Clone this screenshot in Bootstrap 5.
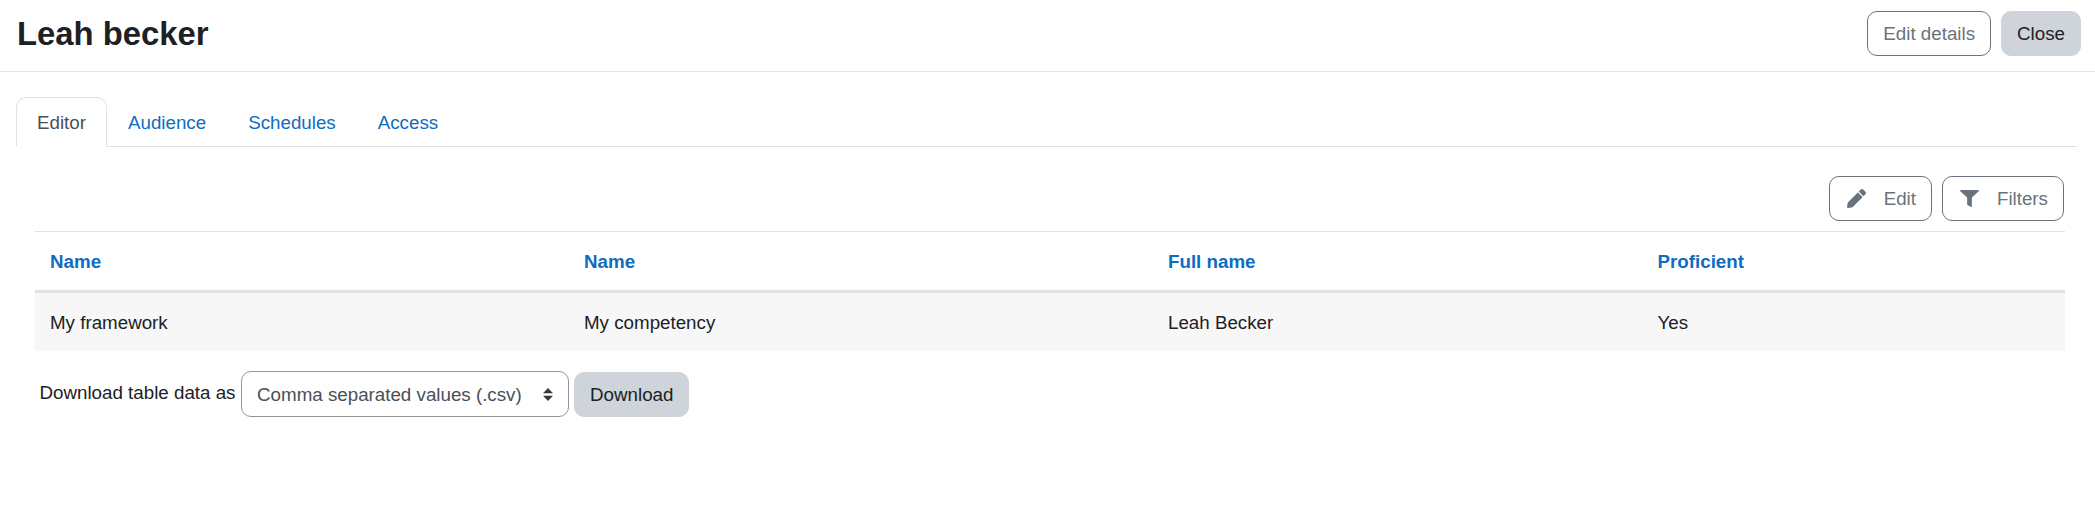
<!DOCTYPE html>
<html lang="en">
<head>
<meta charset="utf-8">
<title>Leah becker</title>
<link rel="stylesheet" href="https://cdn.jsdelivr.net/npm/bootstrap@5.3.0/dist/css/bootstrap.min.css">
<style>
html,body{background:#fff}
body{font-family:"Liberation Sans",Arial,sans-serif;font-size:18.75px;color:#1d2125;line-height:1.5}
.page-head{height:72px;padding:11px 14px 0 17px;border-bottom:1px solid #e3e4e6}
.page-title{font-family:"Liberation Sans",Arial,sans-serif;font-size:32.8px;font-weight:700;line-height:45px;margin:0;color:#1d2125}
.act{font-size:18.75px;line-height:28.1px;padding:7.5px 15px;border-radius:10px;height:45px;white-space:nowrap}
.act-out{border:1px solid #6a737b;color:#6a737b;background:#fff}
.act-sec{border:1px solid #ced4da;background:#ced4da;color:#1d2125}
.act-ic{fill:#6a737b;width:19px;height:19px;flex:none}
.act-ic-funnel{height:17px}
.act-icon{display:flex;align-items:center;gap:18px;padding-left:17px}
.act-gap{gap:10px}
.tabs-wrap{margin:25px 18px 0 16px}
.tabs-wrap .nav-link{font-size:18.75px;line-height:28.1px;padding:11px 20px 9px;color:#0f6cbf;border-radius:10px 10px 0 0}
.tabs-wrap .nav-link.active{color:#495057;border-color:#dee2e6 #dee2e6 #fff}
.bar-row{margin:29px 31px 0 35px;gap:10px}
.data-wrap{margin:10px 30px 0 35px}
.data-tbl{--bs-table-color:#1d2125;width:100%;table-layout:fixed;margin:0}
.data-tbl th,.data-tbl td{padding:16px 15px 14px;font-size:18.75px;line-height:28.1px;vertical-align:middle}
.data-tbl thead th{border-top:1px solid #dee2e6;border-bottom:3px solid #dee2e6}
.data-tbl tbody td{background:#f7f7f7;border:0}
.data-tbl a{color:#0f6cbf;text-decoration:none;font-weight:700}
.c1{width:534px}.c2{width:584px}.c3{width:489.5px}
.dl-row{margin:20px 0 0 39.5px;gap:5px;height:46px}
.dl-sel{width:328px;height:45.5px;font-size:18.75px;line-height:28.1px;color:#495057;border:1px solid #8f959e;border-radius:10px;padding:9px 35px 7px 15px;flex:none;align-self:flex-start;background:#fff url("data:image/svg+xml,%3csvg xmlns='http://www.w3.org/2000/svg' width='4' height='5' viewBox='0 0 4 5'%3e%3cpath fill='%23343a40' d='M2 0L0 2h4zm0 5L0 3h4z'/%3e%3c/svg%3e") no-repeat right 15px center/10px 12.5px}
.dl-lbl{margin:0 .6px 2px 0;line-height:28.1px}
.dl-btn{margin-top:1px}
</style>
</head>
<body>
<header class="page-head d-flex justify-content-between align-items-start">
  <h1 class="page-title">Leah becker</h1>
  <div class="d-flex act-gap">
    <a href="#" class="btn act act-out">Edit details</a>
    <a href="#" class="btn act act-sec">Close</a>
  </div>
</header>
<div class="tabs-wrap">
  <ul class="nav nav-tabs">
    <li class="nav-item"><a class="nav-link active" href="#">Editor</a></li>
    <li class="nav-item"><a class="nav-link" href="#">Audience</a></li>
    <li class="nav-item"><a class="nav-link" href="#">Schedules</a></li>
    <li class="nav-item"><a class="nav-link" href="#">Access</a></li>
  </ul>
</div>
<div class="bar-row d-flex justify-content-end">
  <button type="button" class="btn act act-out act-icon">
    <svg class="act-ic" viewBox="0 0 512 512"><path d="M497.9 142.1l-46.1 46.1c-4.7 4.7-12.3 4.7-17 0l-111-111c-4.7-4.7-4.7-12.3 0-17l46.1-46.1c18.7-18.7 49.1-18.7 67.9 0l60.1 60.1c18.8 18.7 18.8 49.1 0 67.9zM284.2 99.8L21.6 362.4.4 483.9c-2.9 16.4 11.4 30.6 27.8 27.8l121.5-21.3 262.6-262.6c4.7-4.7 4.7-12.3 0-17l-111-111c-4.8-4.7-12.4-4.7-17.1 0z"/></svg>
    <span>Edit</span>
  </button>
  <button type="button" class="btn act act-out act-icon">
    <svg class="act-ic act-ic-funnel" viewBox="0 0 512 512" preserveAspectRatio="none"><path d="M487.976 0H24.028C2.71 0-8.047 25.866 7.058 40.971L192 225.941V432c0 7.831 3.821 15.17 10.237 19.662l80 55.98C298.02 518.69 320 507.493 320 487.98V225.941l184.947-184.97C520.021 25.896 509.338 0 487.976 0z"/></svg>
    <span>Filters</span>
  </button>
</div>
<div class="data-wrap">
  <table class="table data-tbl">
    <thead>
      <tr>
        <th class="c1"><a href="#">Name</a></th>
        <th class="c2"><a href="#">Name</a></th>
        <th class="c3"><a href="#">Full name</a></th>
        <th><a href="#">Proficient</a></th>
      </tr>
    </thead>
    <tbody>
      <tr><td>My framework</td><td>My competency</td><td>Leah Becker</td><td>Yes</td></tr>
    </tbody>
  </table>
</div>
<form class="dl-row d-flex align-items-center">
  <label class="dl-lbl" for="dlf">Download table data as</label>
  <select id="dlf" class="form-select dl-sel"><option>Comma separated values (.csv)</option></select>
  <button type="button" class="btn act act-sec dl-btn">Download</button>
</form>
<script src="https://cdn.jsdelivr.net/npm/bootstrap@5.3.0/dist/js/bootstrap.bundle.min.js"></script>
</body>
</html>
